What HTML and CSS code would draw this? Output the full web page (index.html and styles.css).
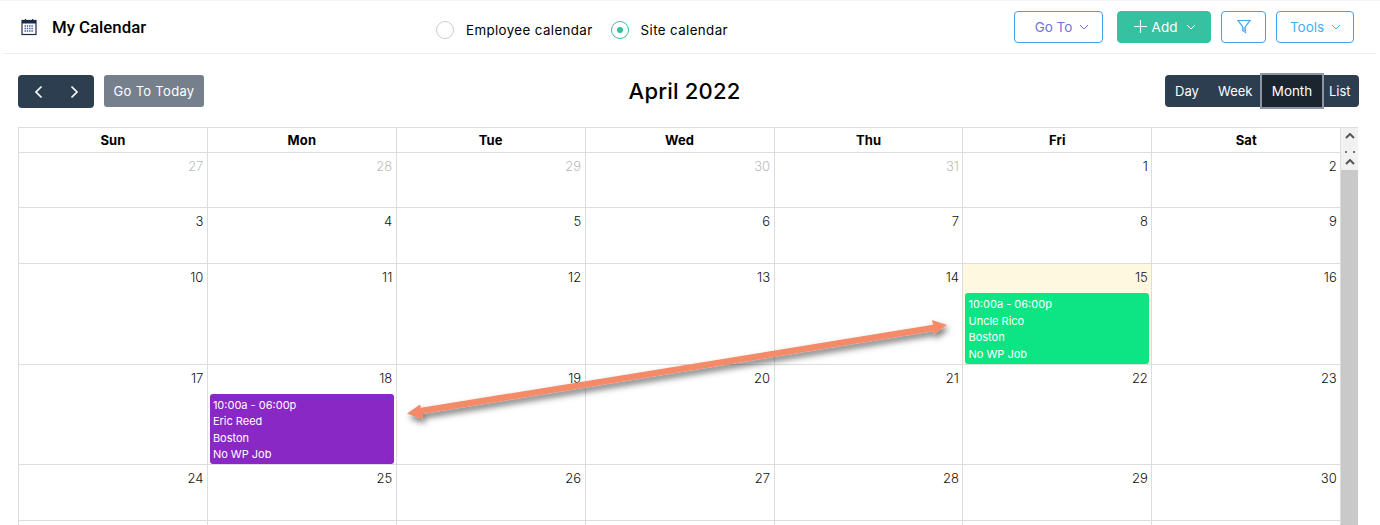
FILE: index.html
```html
<!DOCTYPE html>
<html lang="en">
<head>
<meta charset="utf-8">
<title>My Calendar</title>
<link rel="stylesheet" href="styles.css">
</head>
<body>
<div class="page">
  <header class="topbar">
    <div class="brand">
      <svg class="cal-icon" viewBox="0 0 16 18" width="16" height="18" aria-hidden="true">
        <rect x="1" y="2.5" width="14" height="14" fill="none" stroke="#1d2b4a" stroke-width="1.2"/>
        <rect x="1" y="2.5" width="14" height="3" fill="#1d2b4a"/>
        <path d="M4.5 1v3M11.5 1v3" stroke="#1d2b4a" stroke-width="1.2"/>
        <path d="M3.5 8h9M3.5 10.5h9M3.5 13h9" stroke="#3a5a8c" stroke-width="1.3" stroke-dasharray="1.4 .9"/>
      </svg>
      <h1 class="brand-title">My Calendar</h1>
    </div>
    <div class="radios">
      <span class="radio"></span><span class="radio-label">Employee calendar</span>
      <span class="radio radio-on"></span><span class="radio-label">Site calendar</span>
    </div>
    <div class="actions">
      <button class="btn btn-goto">Go To<svg class="chev" viewBox="0 0 10 6" width="10" height="6"><path d="M1 1l4 4 4-4" fill="none" stroke="currentColor"/></svg></button>
      <button class="btn btn-add"><svg viewBox="0 0 13 13" width="13" height="13"><path d="M6.5 0v13M0 6.5h13" stroke="#fff" stroke-width="1.1"/></svg>Add<svg class="chev chev-add" viewBox="0 0 10 6" width="10" height="6"><path d="M1 1l4 4 4-4" fill="none" stroke="currentColor"/></svg></button>
      <button class="btn btn-filter"><svg viewBox="0 0 14 15" width="14" height="15"><path d="M1 1.500h12L8.500 7.500v6L5.500 11.500v-4z" fill="none" stroke="#3fa3ee" stroke-width="1.2"/><path d="M5.500 8h3v5.500L5.500 11.500z" fill="#8fc2f2"/></svg></button>
      <button class="btn btn-tools">Tools<svg class="chev" viewBox="0 0 10 6" width="10" height="6"><path d="M1 1l4 4 4-4" fill="none" stroke="currentColor"/></svg></button>
    </div>
  </header>

  <section class="toolbar">
    <div class="left-tools">
      <div class="nav">
        <svg viewBox="0 0 9 14" width="9" height="14"><path d="M7.500 1.500L2 7l5.500 5.500" fill="none" stroke="#fff" stroke-width="1.700"/></svg>
        <svg viewBox="0 0 9 14" width="9" height="14"><path d="M1.500 1.500L7 7l-5.500 5.500" fill="none" stroke="#fff" stroke-width="1.700"/></svg>
      </div>
      <button class="today">Go To Today</button>
    </div>
    <h2 class="month-title">April 2022</h2>
    <div class="views">
      <span class="view">Day</span>
      <span class="view">Week</span>
      <span class="view view-on">Month</span>
      <span class="view">List</span>
    </div>
  </section>

  <section class="calendar">
    <div class="head-row">
      <div class="dow">Sun</div><div class="dow">Mon</div><div class="dow">Tue</div><div class="dow">Wed</div><div class="dow">Thu</div><div class="dow">Fri</div><div class="dow">Sat</div>
      <div class="sb-head"><svg viewBox="0 0 10 6" width="10" height="6"><path d="M1 5l4-4 4 4" fill="none" stroke="#555" stroke-width="2"/></svg></div>
    </div>
    <div class="body">
      <div class="weeks">
        <div class="week week-first">
          <div class="day muted">27</div><div class="day muted">28</div><div class="day muted">29</div><div class="day muted">30</div><div class="day muted">31</div><div class="day">1</div><div class="day">2</div>
        </div>
        <div class="week week-second">
          <div class="day">3</div><div class="day">4</div><div class="day">5</div><div class="day">6</div><div class="day">7</div><div class="day">8</div><div class="day">9</div>
        </div>
        <div class="week">
          <div class="day">10</div><div class="day">11</div><div class="day">12</div><div class="day">13</div><div class="day">14</div>
          <div class="day today-cell">15
            <div class="event event-green">
              <div>10:00a - 06:00p</div><div>Uncle Rico</div><div>Boston</div><div>No WP Job</div>
            </div>
          </div>
          <div class="day">16</div>
        </div>
        <div class="week">
          <div class="day">17</div>
          <div class="day">18
            <div class="event event-purple">
              <div>10:00a - 06:00p</div><div>Eric Reed</div><div>Boston</div><div>No WP Job</div>
            </div>
          </div>
          <div class="day">19</div><div class="day">20</div><div class="day">21</div><div class="day">22</div><div class="day">23</div>
        </div>
        <div class="week">
          <div class="day">24</div><div class="day">25</div><div class="day">26</div><div class="day">27</div><div class="day">28</div><div class="day">29</div><div class="day">30</div>
        </div>
        <div class="week">
          <div class="day"></div><div class="day"></div><div class="day"></div><div class="day"></div><div class="day"></div><div class="day"></div><div class="day"></div>
        </div>
      </div>
      <div class="scrollbar">
        <div class="sb-dots"></div>
        <svg viewBox="0 0 10 6" width="10" height="6"><path d="M1 5l4-4 4 4" fill="none" stroke="#555" stroke-width="2"/></svg>
        <div class="sb-thumb"></div>
      </div>
    </div>
  </section>

  <svg class="arrow" viewBox="0 0 1380 525" width="1380" height="525" aria-hidden="true">
    <defs>
      <filter id="shadow" x="-5%" y="-20%" width="110%" height="150%">
        <feDropShadow dx="2" dy="4" stdDeviation="3" flood-color="#000" flood-opacity=".55"/>
      </filter>
    </defs>
    <path filter="url(#shadow)" fill="#f58a68" d="M947 325L932 320L933 324.800L421 407.800L420 404.500L407 413.500L423 419.500L422 414L934 331L933 335z"/>
  </svg>
</div>
</body>
</html>
```
FILE: styles.css
```css
* { box-sizing: border-box; }
html, body { margin: 0; padding: 0; }
body {
  font-family: "Inter", "Liberation Sans", sans-serif;
  background: #fff;
  color: #000;
  overflow: hidden;
}
.page {
  position: relative;
  width: 1380px;
  height: 525px;
  overflow: hidden;
  border-top: 1px solid #f5f5f5;
}
.topbar {
  display: flex;
  align-items: center;
  height: 53px;
  margin: 0 4px 0 3px;
  padding-left: 18px;
  border-bottom: 1px solid #ebedf0;
}
.brand {
  display: flex;
  align-items: center;
  width: 415px;
  gap: 15px;
  margin-top: -1px;
}
.cal-icon { flex: none; }
.brand-title {
  margin: 0;
  font-family: "Roboto", sans-serif;
  font-size: 16.800px;
  font-weight: 500;
  line-height: 20px;
}
.radios {
  display: flex;
  align-items: center;
  font-size: 13.300px;
  font-weight: 400;
  margin-top: 5px;
}
.radio {
  width: 18px;
  height: 18px;
  border: 1px solid #c8cbdc;
  border-radius: 50%;
  margin-right: 12px;
  flex: none;
  position: relative;
}
.radio-on { border-color: #34bf9f; display: flex; align-items: center; justify-content: center; }
.radio-on::after {
  content: "";
  width: 6px;
  height: 6px;
  border-radius: 50%;
  background: #34bf9f;
}
.radio-label { margin-right: 18px; letter-spacing: .4px; }
.radio-label:last-child { margin-right: 0; }
.actions {
  margin-left: auto;
  margin-right: 22px;
  display: flex;
  align-items: center;
  margin-top: -1px;
}
.btn {
  height: 32px;
  border-radius: 4px;
  border: 1px solid #3fa3f0;
  background: #fff;
  font-family: inherit;
  font-size: 13.500px;
  display: flex;
  align-items: center;
  justify-content: center;
  padding: 0;
}
.chev { margin-left: 7px; }
.btn-goto { width: 89px; color: #6f74dc; padding-left: 7px; margin-right: 14px; }
.btn-goto .chev { color: #6f74dc; }
.btn-add { width: 94px; background: #36c1a1; border-color: #36c1a1; color: #fff; margin-right: 10px; gap: 5px; padding-left: 2px; }
.chev-add { margin-left: 4px; }
.btn-filter { width: 45px; margin-right: 10px; }
.btn-tools { width: 78px; color: #3fb0f2; padding-left: 1px; }
.toolbar {
  display: grid;
  grid-template-columns: 1fr auto 1fr;
  align-items: start;
  height: 73px;
  padding: 21px 21px 0 18px;
}
.left-tools { display: flex; gap: 10px; }
.nav {
  width: 76px;
  height: 33px;
  background: #2c3e50;
  border-radius: 4px;
  display: flex;
  align-items: center;
  justify-content: space-between;
  padding: 0 15px 0 16px;
}
.today {
  width: 100px;
  height: 32px;
  background: #76808d;
  border: 0;
  border-radius: 3px;
  color: #fff;
  font-family: inherit;
  font-size: 13px;
  padding: 0;
  letter-spacing: .3px;
}
.month-title {
  margin: 0;
  font-size: 22px;
  font-weight: 500;
  line-height: 32px;
  letter-spacing: .2px;
  padding-right: 8px;
}
.views {
  justify-self: end;
  display: flex;
  align-items: center;
  height: 32px;
  background: #2c3e50;
  border-radius: 4px;
  color: #fff;
  font-size: 13px;
}
.view { padding: 0 6px; line-height: 32px; }
.view:first-child { padding-left: 10px; width: 45px; }
.view:nth-child(2) { width: 50px; padding: 0 0 0 8px; }
.view-on {
  background: #1a252f;
  width: 64px;
  height: 36px;
  line-height: 32px;
  text-align: center;
  padding: 0;
  border: 2.500px solid #8c97a3;
  margin: 0;
  font-size: 13.400px;
}
.view:last-child { width: 35px; padding: 0 0 0 5px; }
.calendar {
  width: 1340px;
  margin-left: 18px;
  border-top: 1px solid #ddd;
  border-left: 1px solid #ddd;
}
.head-row {
  display: grid;
  grid-template-columns: repeat(7, 188.900px) 17px;
  height: 25px;
}
.dow {
  border-right: 1px solid #ddd;
  border-bottom: 1px solid #ddd;
  text-align: center;
  font-size: 13px;
  font-weight: 700;
  line-height: 24px;
  letter-spacing: .1px;
}
.sb-head {
  display: flex;
  justify-content: center;
  align-items: flex-start;
  background: #f1f1f1;
  padding-top: 5px;
}
.body {
  display: grid;
  grid-template-columns: 1322.300px 17px;
}
.week {
  display: grid;
  grid-template-columns: repeat(7, 188.900px);
}
.day {
  min-height: 55.500px;
  border-right: 1px solid #ddd;
  border-bottom: 1px solid #ddd;
  padding: 4px 3.500px 0 2px;
  text-align: right;
  font-size: 13px;
  font-weight: 300;
  line-height: 18px;
  color: #111;
}
.week-first .day { min-height: 55px; }
.week-second .day { min-height: 56px; }
.muted { color: #bbb; }
.today-cell { background: #fff8e1; }
.event {
  margin-top: 7px;
  height: 70.500px;
  margin-right: -1.500px;
  padding: 3px 3px 0;
  border-radius: 3px;
  text-align: left;
  color: #fff;
  font-size: 11px;
  font-weight: 400;
  line-height: 16.500px;
}
.event-green { background: #0de585; }
.event-purple { background: #8a28c6; }
.scrollbar {
  background: #f1f1f1;
  text-align: center;
  display: flex;
  flex-direction: column;
  align-items: center;
  height: 380px;
}
.sb-dots {
  width: 10px;
  height: 2px;
  margin-top: -2px;
  background: linear-gradient(90deg, #777 0 2px, transparent 2px 8px, #777 8px);
}
.scrollbar svg { margin-top: 6px; }
.sb-thumb {
  align-self: stretch;
  flex: 1;
  margin-top: 5px;
  background: #c9c9c9;
}
.arrow {
  position: absolute;
  left: 0;
  top: -1px;
  pointer-events: none;
}
```
